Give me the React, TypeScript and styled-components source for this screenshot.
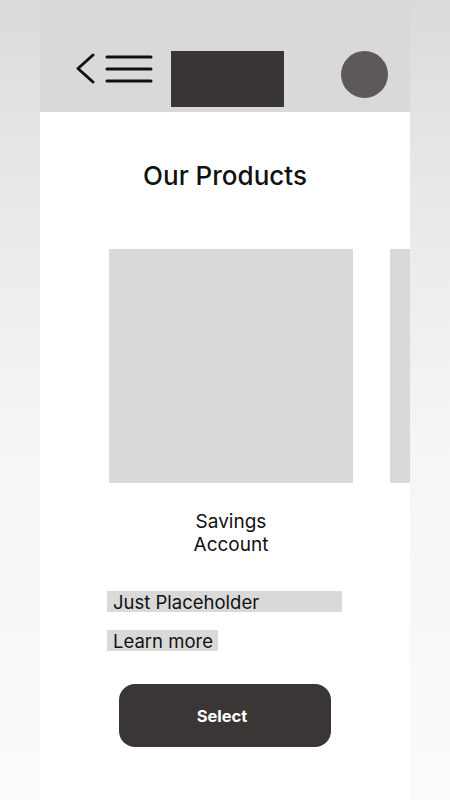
import React from "react";
import styled, { createGlobalStyle } from "styled-components";

const Global = createGlobalStyle`
  html, body { margin: 0; padding: 0; }
  body {
    font-family: Inter, "Noto Sans", sans-serif;
    background: linear-gradient(180deg, #dadada 0%, #e9e9e9 25%, #f5f5f5 55%, #fbfbfb 100%);
    min-height: 800px;
  }
`;

const Frame = styled.div`
  width: 370px;
  min-height: 800px;
  margin: 0 auto;
  background: #ffffff;
  overflow: hidden;
`;

const Header = styled.header`
  height: 112px;
  box-sizing: border-box;
  background: #d9d9d9;
  display: flex;
  align-items: flex-start;
  padding: 51px 22px 0 35px;
`;

const IconButton = styled.button<{ $top: number; $gap?: number }>`
  border: none;
  background: none;
  padding: 0;
  margin-top: ${(p) => p.$top}px;
  margin-left: ${(p) => p.$gap ?? 0}px;
  display: flex;
  cursor: pointer;
`;

const Logo = styled.div`
  width: 113px;
  height: 56px;
  background: #393534;
  margin-left: 18px;
`;

const Avatar = styled.div`
  width: 47px;
  height: 47px;
  border-radius: 50%;
  background: #5d5958;
  margin-left: auto;
`;

const Title = styled.h1`
  margin: 48px 0 0;
  text-align: center;
  font-size: 26px;
  font-weight: 500;
  color: #111;
  line-height: 32px;
`;

const Carousel = styled.div`
  display: flex;
  gap: 37px;
  padding-left: 69px;
  margin-top: 57px;
`;

const Card = styled.div`
  flex: 0 0 244px;
  display: flex;
  flex-direction: column;
`;

const Image = styled.div`
  width: 244px;
  height: 234px;
  background: #d9d9d9;
`;

const CardTitle = styled.div`
  margin-top: 27px;
  text-align: center;
  font-size: 19px;
  line-height: 23px;
  color: #111;
`;

const Placeholder = styled.div<{ $w: number; $top: number }>`
  width: ${(p) => p.$w}px;
  height: 21px;
  margin-top: ${(p) => p.$top}px;
  margin-left: -2px;
  background: #d9d9d9;
  box-sizing: border-box;
  padding-left: 6px;
  font-size: 18.5px;
  line-height: 22px;
  color: #111;
  white-space: nowrap;
`;

const Select = styled.button`
  display: block;
  margin: 33px auto 0;
  width: 212px;
  height: 63px;
  border: none;
  border-radius: 16px;
  background: #3a3635;
  color: #fff;
  font-family: Inter, "Noto Sans", sans-serif;
  font-size: 16.5px;
  font-weight: 700;
  padding: 0 6px 0 0;
  cursor: pointer;
`;

export default function App() {
  return (
    <>
      <Global />
      <Frame>
        <Header>
          <IconButton $top={1} aria-label="Back">
            <svg width="20" height="33" viewBox="0 0 20 33">
              <path d="M18 3 L3 16.5 L18 30" fill="none" stroke="#111" strokeWidth="3" strokeLinecap="round" strokeLinejoin="round" />
            </svg>
          </IconButton>
          <IconButton $top={3} $gap={10} aria-label="Menu">
            <svg width="48" height="30" viewBox="0 0 48 30">
              <path d="M2 3 H46 M2 15 H46 M2 27 H46" stroke="#111" strokeWidth="3" strokeLinecap="round" />
            </svg>
          </IconButton>
          <Logo />
          <Avatar />
        </Header>
        <Title>Our Products</Title>
        <Carousel>
          <Card>
            <Image />
            <CardTitle>
              Savings
              <br />
              Account
            </CardTitle>
            <Placeholder $w={235} $top={35}>Just Placeholder</Placeholder>
            <Placeholder $w={111} $top={18}>Learn more</Placeholder>
          </Card>
          <Card>
            <Image />
          </Card>
        </Carousel>
        <Select>Select</Select>
      </Frame>
    </>
  );
}
